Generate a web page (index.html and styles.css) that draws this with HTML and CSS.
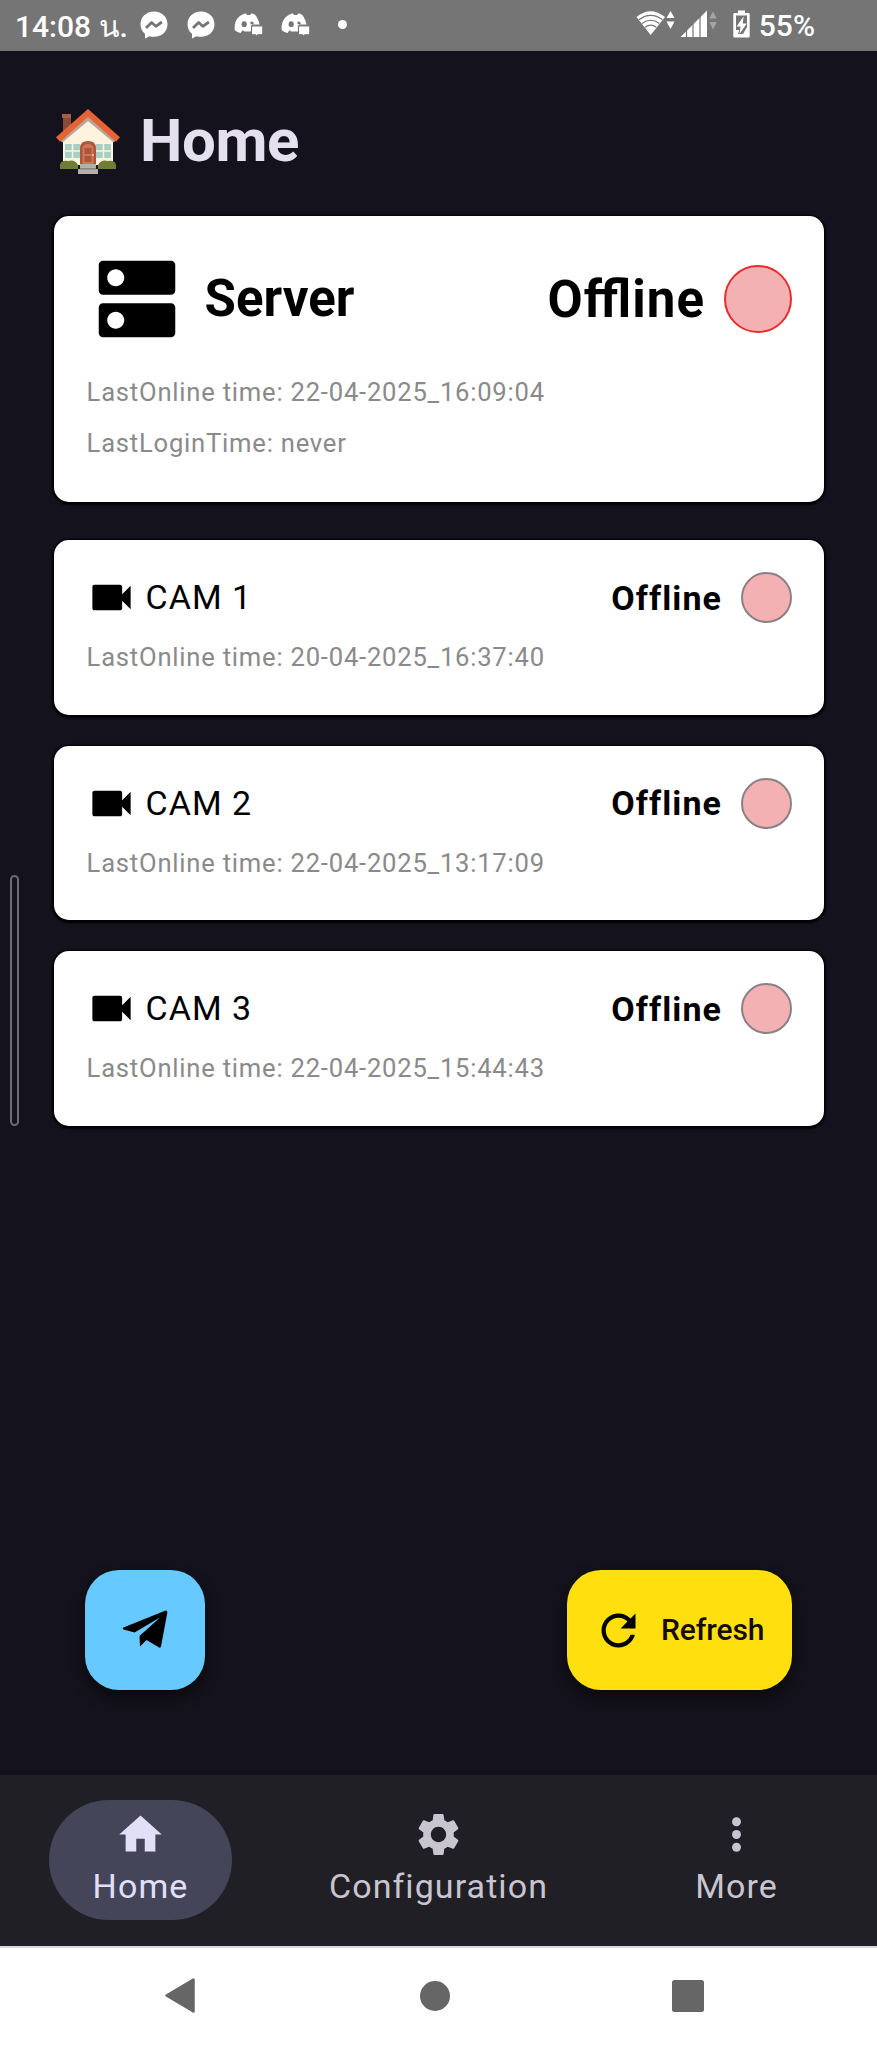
FILE: index.html
```html
<!DOCTYPE html>
<html lang="en">
<head>
<meta charset="utf-8">
<title>Home</title>
<link rel="stylesheet" href="styles.css">
</head>
<body>
<svg class="defs" width="0" height="0" aria-hidden="true">
  <symbol id="messenger" viewBox="0 0 28 28"><path fill="#fff" d="M14 .5C6 .5.5 6.200.5 13.200c0 4 1.700 7.300 4.500 9.600V27.500l4.400-2.300c1.400.4 3 .6 4.600.6 8 0 13.500-5.600 13.500-12.600S22 .5 14 .5z"/><path fill="none" stroke="#757575" stroke-width="2.800" stroke-linejoin="round" d="M6 17l5.600-5.500 4.300 3.800 6-4.300"/></symbol>
  <symbol id="discord" viewBox="0 0 30 26"><path fill="#fff" d="M8.500 2.500c2-.9 3-.9 3.600-.9l.8 1.400h3.400l.8-1.400c1.200 0 2.600.4 4.200 1.300 2.300 3 3.600 6.200 4.200 9.600H18v7h-7.500l-2-1.300L6.600 21C4 20.500 2 19.500.8 18.300 0 11 2.500 5.500 8.500 2.500z"/><ellipse cx="10.200" cy="12.200" rx="2.600" ry="2.900" fill="#757575"/><path d="M16.500 9.800q3-1 3.500 2.500h-3.500z" fill="#757575"/><path fill="#fff" stroke="#757575" stroke-width="1.200" d="M17.500 13.800h11.300v9h-5L21.500 25v-2.200h-4z"/></symbol>
  <symbol id="camera" viewBox="0 0 24 24"><path d="M17 10.500V7c0-.55-.45-1-1-1H4c-.55 0-1 .45-1 1v10c0 .55.45 1 1 1h12c.55 0 1-.45 1-1v-3.500l4 4v-11l-4 4z"/></symbol>
</svg>

<div class="screen">
  <header class="status">
    <span class="clock">14:08 <span class="thai">น.</span></span>
    <div class="notifs">
      <svg width="28" height="28"><use href="#messenger"/></svg>
      <svg width="28" height="28"><use href="#messenger"/></svg>
      <svg width="30" height="26"><use href="#discord"/></svg>
      <svg width="30" height="26"><use href="#discord"/></svg>
      <span class="dot"></span>
    </div>
    <div class="system">
      <svg class="wifi" width="40" height="28" viewBox="0 0 40 28">
        <path fill="#fff" d="M.5 7Q14.700-4.500 29 7L14.700 25z"/>
        <g fill="none" stroke="#757575" stroke-width="1.100"><path d="M3 9.700Q14.700 1 26.500 9.700M6 13.500q8.700-6.500 17.400 0M9 17.200q5.700-4.200 11.400 0"/></g>
        <path fill="#fff" d="M34.500 1l4 7h-8zM34.500 19l4-7.500h-8z"/>
      </svg>
      <svg class="signal" width="38" height="28" viewBox="0 0 38 28">
        <path fill="#fff" d="M.5 27L27 .5V27z"/>
        <path stroke="#757575" stroke-width="1.200" d="M6.500 0v28M13 0v28M20 0v28"/>
        <path fill="#a5a5a5" d="M33 1.500l3.700 7h-7.400zM33 19.500l3.700-7.500h-7.400z"/>
      </svg>
      <svg class="battery" width="17" height="28" viewBox="0 0 17 28">
        <path fill="#fff" d="M5 .5h7V3h3.500q1.200 0 1.200 1.300v21.900q0 1.200-1.200 1.200h-14Q.3 27.400.3 26.200V4.300Q.3 3 1.500 3H5z"/>
        <path fill="#757575" d="M3 5.500h11L14 17l-4 7H5l1.200-4H3z"/>
        <path fill="#fff" d="M10.500 6.500L3.500 16.500h4L6.500 24l7.300-10.500h-4z"/>
      </svg>
      <span class="percent">55%</span>
    </div>
  </header>

  <main class="content">
    <h1 class="title">
      <svg class="house" width="66" height="66" viewBox="0 0 66 66">
        <path fill="#8b4a38" d="M8 6h8v16l-8 8z"/><path fill="#a85d49" d="M7 5h9v4H7z"/>
        <path fill="#fff3df" d="M8 28L33 7l25 21v28H8z"/>
        <path fill="none" stroke="#b9a69b" stroke-width="4" d="M6 32L33 9.500 60 32"/>
        <path fill="none" stroke="#e66336" stroke-width="6" d="M3 30.500L33 4l30 26.500"/>
        <g fill="#a7cfc3"><path d="M10 35h15v14H10zM41 35h15v14H41z"/></g>
        <path fill="none" stroke="#fff3df" stroke-width="1.500" d="M17.500 35v14M48.500 35v14M10 42h15M41 42h15"/>
        <path fill="#ad563b" d="M25 56V39q0-7 8-7t8 7v17z"/>
        <path fill="#d1765a" d="M27.500 55V40q0-5 5.500-5t5.500 5v15z"/>
        <path fill="#ad563b" d="M29.500 39h7v6h-7zM29.500 47h7v6h-7z"/><circle cx="38" cy="46" r="1" fill="#ffd08a"/>
        <path fill="#6f7d34" d="M5 60v-4q1-5 8-4 7-2 10 4v4zM43 60v-4q3-6 10-4 7-1 8 4v4z"/>
        <path fill="#b5afac" d="M25 55h16v5h2v5H23v-5h2z"/><path fill="#89817e" d="M25 59h16v1.500H25z"/>
      </svg>
      <span>Home</span>
    </h1>

    <section class="card server">
      <div class="row">
        <svg class="server-icon" width="102" height="102" viewBox="0 0 24 24"><path d="M20 13H4c-.55 0-1 .45-1 1v6c0 .55.45 1 1 1h16c.55 0 1-.45 1-1v-6c0-.55-.45-1-1-1zM7 19c-1.100 0-2-.9-2-2s.9-2 2-2 2 .9 2 2-.9 2-2 2zM20 3H4c-.55 0-1 .45-1 1v6c0 .55.45 1 1 1h16c.55 0 1-.45 1-1V4c0-.55-.45-1-1-1zM7 9c-1.100 0-2-.9-2-2s.9-2 2-2 2 .9 2 2-.9 2-2 2z"/></svg>
        <h2 class="server-name">Server</h2>
        <span class="state big">Offline</span>
        <span class="lamp large"></span>
      </div>
      <p class="meta">LastOnline time: 22-04-2025_16:09:04</p>
      <p class="meta">LastLoginTime: never</p>
    </section>

    <section class="card cam">
      <div class="row">
        <svg width="51" height="51"><use href="#camera"/></svg>
        <h3 class="cam-name">CAM 1</h3>
        <span class="state">Offline</span><span class="lamp"></span>
      </div>
      <p class="meta">LastOnline time: 20-04-2025_16:37:40</p>
    </section>
    <section class="card cam">
      <div class="row">
        <svg width="51" height="51"><use href="#camera"/></svg>
        <h3 class="cam-name">CAM 2</h3>
        <span class="state">Offline</span><span class="lamp"></span>
      </div>
      <p class="meta">LastOnline time: 22-04-2025_13:17:09</p>
    </section>
    <section class="card cam">
      <div class="row">
        <svg width="51" height="51"><use href="#camera"/></svg>
        <h3 class="cam-name">CAM 3</h3>
        <span class="state">Offline</span><span class="lamp"></span>
      </div>
      <p class="meta">LastOnline time: 22-04-2025_15:44:43</p>
    </section>

    <div class="actions">
      <button class="fab send" aria-label="Telegram">
        <svg width="46" height="38" viewBox="0 0 46 38"><path d="M1.500 17.500L43 .8q2.700-.8 2.300 2L39 36.500q-.4 1.800-2.300.8L24.500 30 18 36.500l-.5-10.500L38 7.500 12.500 22.500 1.500 19.500q-1.500-1 0-2z"/></svg>
      </button>
      <button class="fab refresh">
        <svg width="51" height="51" viewBox="0 0 24 24"><path d="M17.650 6.350C16.200 4.900 14.210 4 12 4c-4.420 0-7.990 3.580-7.990 8s3.570 8 7.990 8c3.730 0 6.840-2.550 7.730-6h-2.080c-.82 2.330-3.040 4-5.650 4-3.310 0-6-2.690-6-6s2.690-6 6-6c1.660 0 3.140.69 4.220 1.780L13 11h7V4l-2.350 2.350z"/></svg>
        <span>Refresh</span>
      </button>
    </div>
  </main>

  <nav class="tabs">
    <a class="tab active">
      <svg width="51" height="51" viewBox="0 0 24 24"><path d="M10 20v-6h4v6h5v-8h3L12 3 2 12h3v8z"/></svg>
      <span>Home</span>
    </a>
    <a class="tab">
      <svg width="51" height="51" viewBox="0 0 24 24"><path d="M19.140 12.940c.04-.3.06-.61.06-.94 0-.32-.02-.64-.07-.94l2.030-1.580c.18-.14.23-.41.12-.61l-1.920-3.320c-.12-.22-.37-.29-.59-.22l-2.390.96c-.5-.38-1.030-.7-1.620-.94l-.36-2.540c-.04-.24-.24-.41-.48-.41h-3.840c-.24 0-.43.17-.47.41l-.36 2.540c-.59.24-1.130.57-1.620.94l-2.390-.96c-.22-.08-.47 0-.59.22L2.740 8.870c-.12.21-.08.47.12.61l2.030 1.580c-.05.3-.09.63-.09.94s.02.64.07.94l-2.030 1.580c-.18.14-.23.41-.12.61l1.920 3.320c.12.22.37.29.59.22l2.390-.96c.5.38 1.030.7 1.620.94l.36 2.540c.05.24.24.41.48.41h3.840c.24 0 .44-.17.47-.41l.36-2.540c.59-.24 1.130-.56 1.620-.94l2.390.96c.22.08.47 0 .59-.22l1.920-3.320c.12-.22.07-.47-.12-.61l-2.010-1.580zM12 15.600c-1.980 0-3.600-1.620-3.600-3.600s1.620-3.600 3.600-3.600 3.600 1.620 3.600 3.600-1.620 3.600-3.600 3.600z"/></svg>
      <span>Configuration</span>
    </a>
    <a class="tab">
      <svg width="51" height="51" viewBox="0 0 24 24"><circle cx="12" cy="6" r="2.100"/><circle cx="12" cy="12" r="2.100"/><circle cx="12" cy="18" r="2.100"/></svg>
      <span>More</span>
    </a>
  </nav>

  <footer class="sysnav">
    <svg class="back" width="30" height="35" viewBox="0 0 30 35"><path d="M28.500 1.500v32L1.500 17.500z" stroke-width="2.500" stroke-linejoin="round"/></svg>
    <svg class="home" width="30" height="30" viewBox="0 0 30 30"><circle cx="15" cy="15" r="15"/></svg>
    <svg width="32" height="32" viewBox="0 0 32 32"><rect width="32" height="32" rx="2.500"/></svg>
  </footer>
  <div class="edge-handle"></div>
</div>
</body>
</html>
```

FILE: styles.css
```css
* { box-sizing: border-box; }
body {
  margin: 0;
  font-family: Roboto, "Noto Sans", sans-serif;
  background: #14121c;
}
h1, h2, h3, p { margin: 0; }
svg { display: block; flex: none; }
.defs { position: absolute; }
.screen {
  position: relative;
  width: 877px;
  height: 2048px;
  display: flex;
  flex-direction: column;
  overflow: hidden;
}

/* Status bar */
.status {
  height: 51px;
  padding-left: 15px;
  background: #757575;
  color: #fff;
  display: flex;
  align-items: center;
  font-size: 30px;
  font-weight: 500;
}
.clock { width: 125px; white-space: nowrap; padding-top: 1px; }
.thai { font-weight: 500; font-size: 30px; }
.notifs { display: flex; align-items: center; gap: 19px; height: 49px; align-self: flex-start; }
.notifs svg:nth-child(n+4) { margin-left: -2px; }
.dot { width: 9px; height: 9px; border-radius: 50%; background: #fff; margin-left: 8px; }
.system { display: flex; align-items: center; margin-left: auto; margin-right: 62px; height: 48px; align-self: flex-start; }
.signal { margin-left: 4px; }
.battery { margin-left: 15px; }
.percent { margin-left: 9px; padding-top: 3px; }

/* Content */
.content {
  height: 1724px;
  padding: 0 53px;
  display: flex;
  flex-direction: column;
}
.title {
  height: 165px;
  padding: 55px 0 0 2px;
  display: flex;
  align-items: flex-start;
  color: #e4e0f0;
  font-size: 60px;
  line-height: 70px;
  font-weight: 700;
  letter-spacing: -0.4px;
}
.house { margin-top: 3px; margin-right: 19px; }

.card {
  flex: none;
  margin-left: 0.600px;
  background: #fff;
  border-radius: 15px;
  padding: 32px 32px 0;
  box-shadow: 0 1px 2px 2px #030207;
}
.server { height: 285.500px; margin-bottom: 38.600px; }
.cam { height: 174.500px; margin-bottom: 31.200px; }
.row { display: flex; align-items: center; color: #000; }
.server-name {
  margin-left: 17px;
  font-size: 51px;
  line-height: 60px;
  font-weight: 700;
}
.server .row { height: 102px; margin-bottom: 25px; }
.cam .row { height: 51px; margin-bottom: 17px; }
.server .meta + .meta { margin-top: 17px; }
.cam-name {
  margin-left: 9px;
  font-size: 34px;
  line-height: 51px;
  font-weight: 400;
  letter-spacing: 1px;
}
.state { margin-left: auto; font-size: 34px; font-weight: 700; letter-spacing: 1.070px; }
.big {
  font-size: 51px;
  letter-spacing: 1.070px;
  font-feature-settings: "liga" 1;
}
.lamp {
  width: 51px;
  height: 51px;
  margin-left: 19px;
  border-radius: 50%;
  background: #f3b1b3;
  border: 2px solid #8b8184;
}
.large { width: 68px; height: 68px; border-color: #e92c2c; }
.meta {
  padding-left: 1px;
  color: #8a8a8a;
  font-size: 25.600px;
  line-height: 34px;
  letter-spacing: 0.780px;
  white-space: nowrap;
}

.actions {
  margin-top: auto;
  padding: 0 32px 85px;
  display: flex;
  justify-content: space-between;
}
.fab {
  height: 120px;
  border: 0;
  border-radius: 34px;
  display: flex;
  align-items: center;
  justify-content: center;
  color: #140c00;
  font: 500 30px Roboto, sans-serif;
  box-shadow: 0 7px 14px rgba(8, 8, 8, .75);
}
.send { width: 120px; background: #66c9ff; }
.send svg { margin: -2px 0 0 -1px; }
.refresh { width: 225px; background: #ffdf0e; gap: 17px; justify-content: flex-start; padding: 0 0 0 26px; }
.refresh span { margin-top: -1px; letter-spacing: -0.100px; }

/* Bottom tabs */
.tabs {
  height: 171px;
  background: #201f25;
  display: grid;
  grid-template-columns: 281px 315px 281px;
  justify-items: center;
  align-items: start;
  padding-top: 25px;
}
.tab {
  height: 120px;
  padding: 9px 43.500px 0;
  border-radius: 60px;
  display: flex;
  flex-direction: column;
  align-items: center;
  color: #c8c5d0;
  fill: #c8c5d0;
  font-size: 34px;
  line-height: 52px;
  letter-spacing: 1.070px;
}
.active { background: #45455a; color: #e2e0f9; fill: #e2e0f9; }

/* System navigation */
.sysnav {
  height: 102px;
  background: #fff;
  border-top: 2px solid #d8d8d8;
  padding: 0 173px 5px 165px;
  display: flex;
  justify-content: space-between;
  align-items: center;
  fill: #666;
}
.back { stroke: #666; }
.home { margin-left: 3px; }

.edge-handle {
  position: absolute;
  left: 10px;
  top: 875px;
  width: 9px;
  height: 251px;
  border: 2px solid #6c6b74;
  border-radius: 5px;
}
```
